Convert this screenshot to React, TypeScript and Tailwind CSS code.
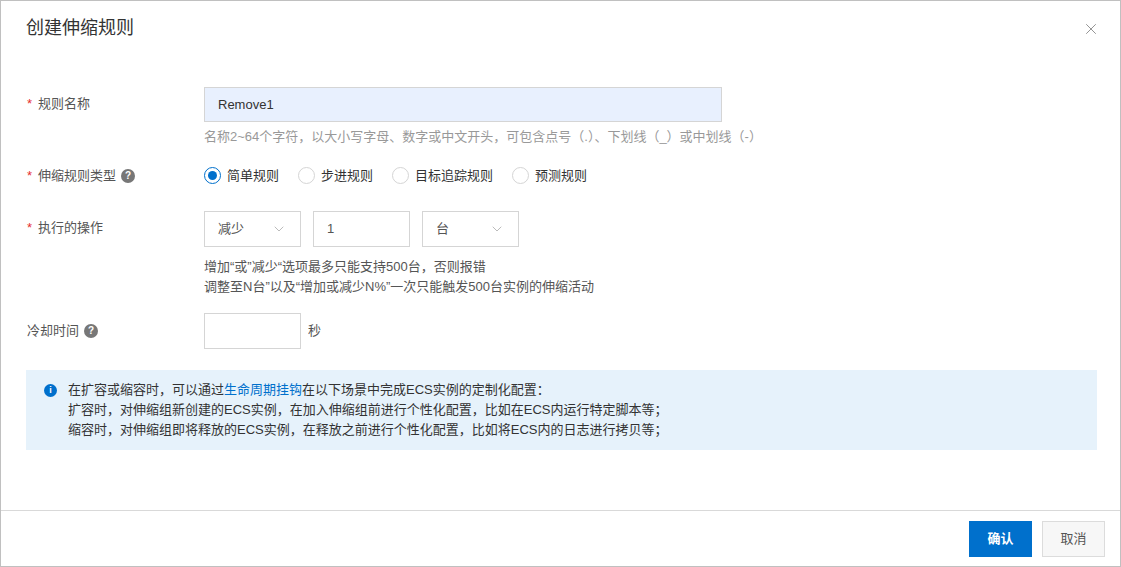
import { ChevronDown, X } from 'lucide-react';

const font = { fontFamily: '"Liberation Sans", "Noto Sans CJK SC", sans-serif' };

function Label({ text, required, help }: { text: string; required?: boolean; help?: boolean }) {
  return (
    <div className="w-[178px] shrink-0 flex items-center text-[13px] text-[#555] h-[34px] pl-[1px]">
      {required && <span className="text-[#e62e2e] mr-[6px]">*</span>}
      <span>{text}</span>
      {help && (
        <span className="ml-[5px] w-[14px] h-[14px] rounded-full bg-[#777] text-white text-[10px] font-bold flex items-center justify-center">?</span>
      )}
    </div>
  );
}

function Select({ value }: { value: string }) {
  return (
    <div className="w-[97px] h-[36px] border border-[#d5d5d5] flex items-center justify-between px-[13px] text-[13px] text-[#555]">
      <span>{value}</span>
      <ChevronDown className="w-[16px] h-[16px] text-[#aaa]" strokeWidth={1.2} />
    </div>
  );
}

function Radio({ label, checked }: { label: string; checked?: boolean }) {
  return (
    <label className="flex items-center gap-[6px] mr-[19px] text-[13px] text-[#333]">
      <span className={`w-[17px] h-[17px] rounded-full border flex items-center justify-center ${checked ? 'border-[#0070cc]' : 'border-[#d5d5d5]'}`}>
        {checked && <span className="w-[9px] h-[9px] rounded-full bg-[#0070cc]" />}
      </span>
      {label}
    </label>
  );
}

export default function App() {
  return (
    <div style={font} className="w-[1121px] h-[567px] border border-[#c0c0c0] bg-white flex flex-col">
      {/* Header */}
      <div className="flex items-center justify-between h-[55px] pl-[25px] pr-[20px]">
        <span className="text-[18px] text-[#333]">创建伸缩规则</span>
        <X className="w-[18px] h-[18px] text-[#888]" strokeWidth={1.2} />
      </div>

      {/* Body */}
      <div className="flex-1 px-[25px] pt-[31px]">
        <div className="flex">
          <Label text="规则名称" required />
          <div>
            <div className="w-[518px] h-[35px] bg-[#e8f0fe] border border-[#d5d5d5] flex items-center px-[13px] text-[13px] text-[#333]">Remove1</div>
            <div className="mt-[5px] text-[13px] text-[#999]">名称2~64个字符，以大小写字母、数字或中文开头，可包含点号（.）、下划线（_）或中划线（-）</div>
          </div>
        </div>

        <div className="flex mt-[12px]">
          <Label text="伸缩规则类型" required help />
          <div className="flex items-center h-[34px]">
            <Radio label="简单规则" checked />
            <Radio label="步进规则" />
            <Radio label="目标追踪规则" />
            <Radio label="预测规则" />
          </div>
        </div>

        <div className="flex mt-[18px]">
          <Label text="执行的操作" required />
          <div>
            <div className="flex gap-[12px]">
              <Select value="减少" />
              <div className="w-[97px] h-[36px] border border-[#d5d5d5] flex items-center px-[13px] text-[13px] text-[#555]">1</div>
              <Select value="台" />
            </div>
            <div className="mt-[10px] text-[13px] text-[#555] leading-[20px]">
              <div>增加“或”减少“选项最多只能支持500台，否则报错</div>
              <div>调整至N台”以及“增加或减少N%”一次只能触发500台实例的伸缩活动</div>
            </div>
          </div>
        </div>

        <div className="flex mt-[16px] items-center">
          <Label text="冷却时间" help />
          <div className="w-[97px] h-[36px] border border-[#d5d5d5]" />
          <span className="ml-[7px] text-[13px] text-[#555]">秒</span>
        </div>

        <div className="mt-[21px] w-[1071px] h-[80px] bg-[#e6f2fb] flex pl-[18px] pt-[10px] text-[13px] text-[#333] leading-[20px]">
          <span className="mt-[4px] w-[13px] h-[13px] rounded-full bg-[#0070cc] text-white text-[9px] font-bold flex items-center justify-center shrink-0">i</span>
          <div className="ml-[11px]">
            <div>在扩容或缩容时，可以通过<span className="text-[#0070cc]">生命周期挂钩</span>在以下场景中完成ECS实例的定制化配置：</div>
            <div>扩容时，对伸缩组新创建的ECS实例，在加入伸缩组前进行个性化配置，比如在ECS内运行特定脚本等；</div>
            <div>缩容时，对伸缩组即将释放的ECS实例，在释放之前进行个性化配置，比如将ECS内的日志进行拷贝等；</div>
          </div>
        </div>
      </div>

      {/* Footer */}
      <div className="h-[56px] border-t border-[#d9d9d9] flex items-center justify-end gap-[10px] pr-[15px]">
        <button className="w-[63px] h-[36px] bg-[#0070cc] text-white text-[13px] font-bold">确认</button>
        <button className="w-[63px] h-[36px] bg-[#f7f7f7] border border-[#dcdcdc] text-[#555] text-[13px]">取消</button>
      </div>
    </div>
  );
}
